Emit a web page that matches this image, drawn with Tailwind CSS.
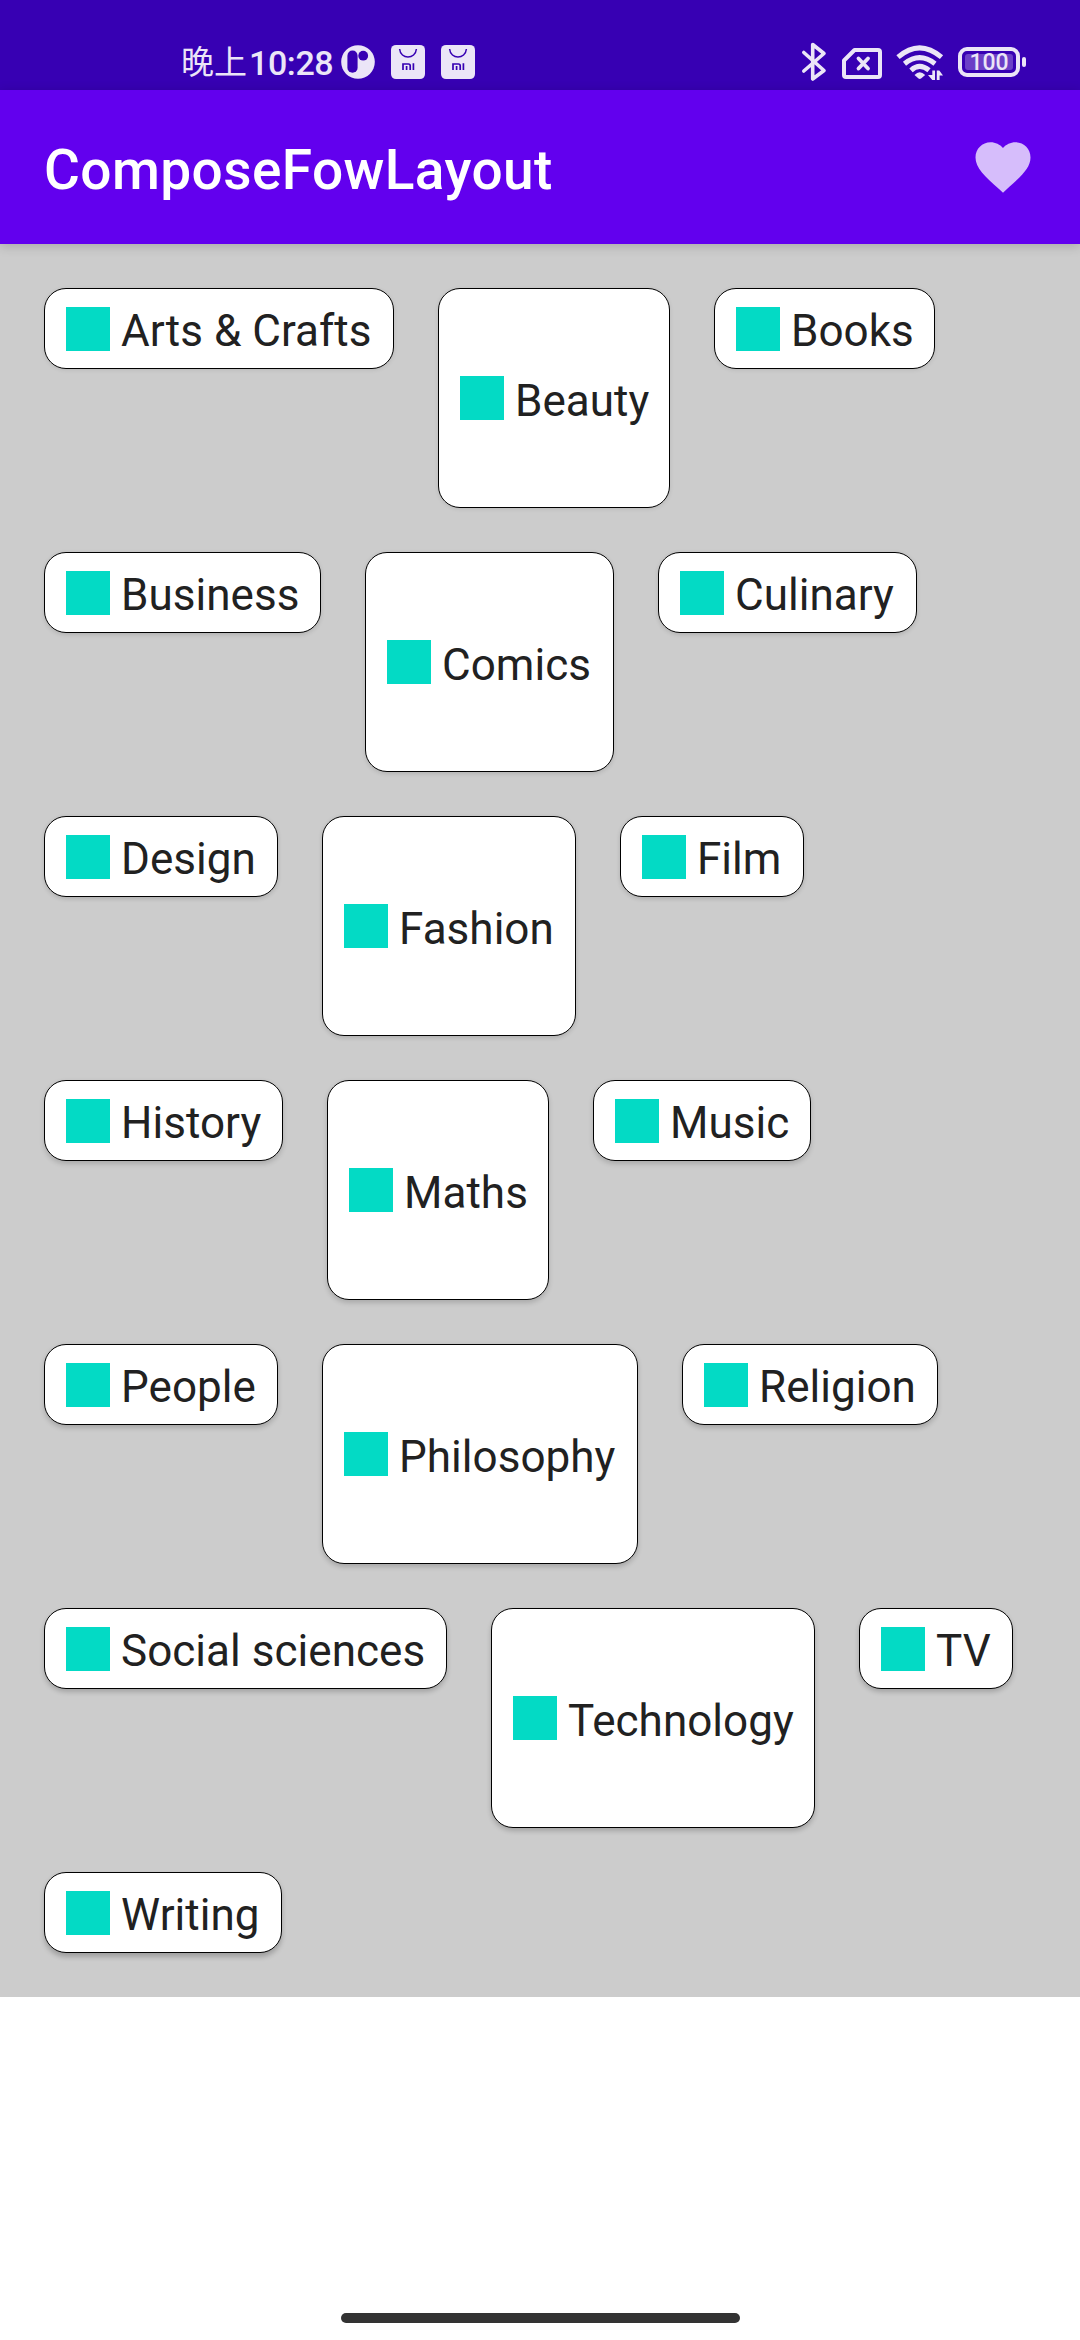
<!DOCTYPE html>
<html lang="zh">
<head>
<meta charset="utf-8">
<meta name="viewport" content="width=device-width">
<title>ComposeFowLayout</title>
<script src="https://cdn.jsdelivr.net/npm/@tailwindcss/browser@4"></script>
</head>
<body class="bg-white font-['Roboto','Noto_Sans_CJK_SC',sans-serif]">
<div class="flex h-[2340px] w-[1080px] flex-col overflow-hidden">
  <!-- Status bar -->
  <div class="flex h-[90px] shrink-0 items-start bg-[#3700b3] pl-[181px] pt-[42px] text-[#ebe5f7]">
    <div class="flex h-10 w-[160px] items-center whitespace-nowrap pt-0.5 leading-10">
      <span class="w-[68px] text-[33px]">晚上</span><span class="text-[34px] font-medium tracking-[-0.4px]">10:28</span>
    </div>
    <svg class="h-10 w-[34px]" viewBox="341 42 34 40"><circle cx="358" cy="62" r="16.8" fill="currentColor"/><rect x="347.4" y="50.6" width="10.2" height="22.2" rx="5.1" fill="#3700b3"/><circle cx="363.2" cy="55.7" r="4.9" fill="#3700b3"/></svg>
    <svg class="ml-4 h-10 w-[34px]" viewBox="0 -3 34 40"><rect y="-.1" width="34" height="34.2" rx="5" fill="currentColor"/><path d="M8.6 4C9.5 14.6 24.500 14.600 25.400 4" fill="none" stroke="#3700b3" stroke-width="1.500"/><g fill="none" stroke="#3700b3" stroke-width="1.700"><path d="M12 25v-6h5.500q1.700 0 1.700 1.700v4.300M15.600 21v4M22.400 18.200v6.800"/></g></svg>
    <svg class="ml-4 h-10 w-[34px]" viewBox="0 -3 34 40"><rect y="-.1" width="34" height="34.2" rx="5" fill="currentColor"/><path d="M8.6 4C9.5 14.6 24.500 14.600 25.400 4" fill="none" stroke="#3700b3" stroke-width="1.500"/><g fill="none" stroke="#3700b3" stroke-width="1.700"><path d="M12 25v-6h5.500q1.700 0 1.700 1.700v4.300M15.600 21v4M22.400 18.200v6.800"/></g></svg>
    <!-- Bluetooth -->
    <svg class="ml-[325px] h-10 w-[28px]" viewBox="800 42 28 40" fill="none" stroke="currentColor" stroke-width="3.600" stroke-linecap="round" stroke-linejoin="round"><path d="M803.800 52.500 824 70.500 812.700 79V44.500L824 53.500 803.800 71"/></svg>
    <!-- SIM -->
    <svg class="ml-[14px] h-10 w-10" viewBox="842 42 40 40" fill="none" stroke="currentColor" stroke-width="4" stroke-linejoin="round"><path d="M854.500 50H878q2 0 2 2V75q0 2-2 2H846q-2 0-2-2V60.500Z"/><path d="m858.500 58.500 9.500 10m0-10-9.500 10" stroke-width="3.800" stroke-linecap="round"/></svg>
    <!-- Wi-Fi -->
    <svg class="ml-[13px] h-10 w-[50px]" viewBox="895 42 50 40" fill="none" stroke="currentColor" stroke-width="5"><path d="M898 57.200Q919.500 38.500 941.500 57.200M904.500 63.700Q919.500 51.500 935 63.700M911 70.300Q919.500 62.500 929 70.300"/><path d="M914.500 75Q919.700 69.500 925.200 75L921 78.500Q919.800 79.400 918.500 78.500Z" fill="currentColor" stroke="none"/><path d="M932.300 70.500h2.700v9.500h-2.700l-4.300-5h4.300ZM936.800 80V70.500h2.500l3.700 5h-3.400V80Z" stroke="none" fill="currentColor"/></svg>
    <!-- Battery -->
    <div class="ml-[13px] mt-[5px] flex items-center gap-0.5">
      <div class="h-[30px] w-[62px] rounded-[9px] border-4 border-[#ebe5f7] p-[3px]">
        <div class="flex h-4 items-center justify-center rounded-[3px] bg-[#6b3fc7] pt-px text-[23px] font-medium leading-none">100</div>
      </div>
      <div class="h-2.5 w-1 rounded-sm bg-[#ebe5f7]"></div>
    </div>
  </div>
  <!-- Top app bar -->
  <header class="relative z-10 flex h-[154px] shrink-0 items-center justify-between bg-[#6200ee] px-11 shadow-[0_2px_11px_rgba(0,0,0,0.18)]">
    <h1 class="pt-1.5 text-[55px] font-medium leading-none tracking-[0.41px] text-white">ComposeFowLayout</h1>
    <svg class="size-[66px] text-white/74" viewBox="0 0 24 24" fill="currentColor"><path d="M12 21.350l-1.450-1.320C5.400 15.360 2 12.280 2 8.500 2 5.420 4.420 3 7.500 3c1.740 0 3.410.810 4.500 2.090C13.090 3.810 14.760 3 16.500 3 19.580 3 22 5.420 22 8.500c0 3.780-3.400 6.860-8.550 11.540L12 21.350z"/></svg>
  </header>
  <!-- Topic chips -->
  <main id="chips" class="flex h-[1753px] shrink-0 flex-wrap content-start items-start gap-11 bg-[#cccccc] p-11 text-[44px] leading-[59px] tracking-[0.04px] text-[#212121]"></main>
  <div class="flex flex-1 items-end justify-center pb-[17px]">
    <div class="h-2.5 w-[399px] rounded-full bg-[#333333]"></div>
  </div>
</div>
<script>
// Each topic with its chip width in pixels.
const topics = [
  ["Arts & Crafts", 350], ["Beauty", 232], ["Books", 221],
  ["Business", 277], ["Comics", 249], ["Culinary", 259],
  ["Design", 234], ["Fashion", 254], ["Film", 184],
  ["History", 239], ["Maths", 222], ["Music", 218],
  ["People", 234], ["Philosophy", 316], ["Religion", 256],
  ["Social sciences", 403], ["Technology", 324], ["TV", 154],
  ["Writing", 238]
];
const chips = document.getElementById("chips");
topics.forEach(([topic, width], i) => {
  const chip = document.createElement("div");
  chip.className = "flex items-center gap-[11px] whitespace-nowrap rounded-[22px] border border-black bg-white px-[21px] " + (i % 3 === 1 ? "h-[220px]" : "h-[81px]");
  chip.style.width = width + "px";
  // Elevation shadows fall further the lower a chip sits on the page.
  const row = Math.floor(i / 3);
  chip.style.boxShadow = `0 ${1 + row * 0.4}px ${4 + row * 0.3}px rgba(0,0,0,${0.1 + row * 0.02})`;
  const square = document.createElement("span");
  square.className = "size-11 shrink-0 bg-[#03dac5]";
  const label = document.createElement("span");
  label.className = "pt-1.5";
  label.textContent = topic;
  chip.append(square, label);
  chips.append(chip);
});
</script>
</body>
</html>
